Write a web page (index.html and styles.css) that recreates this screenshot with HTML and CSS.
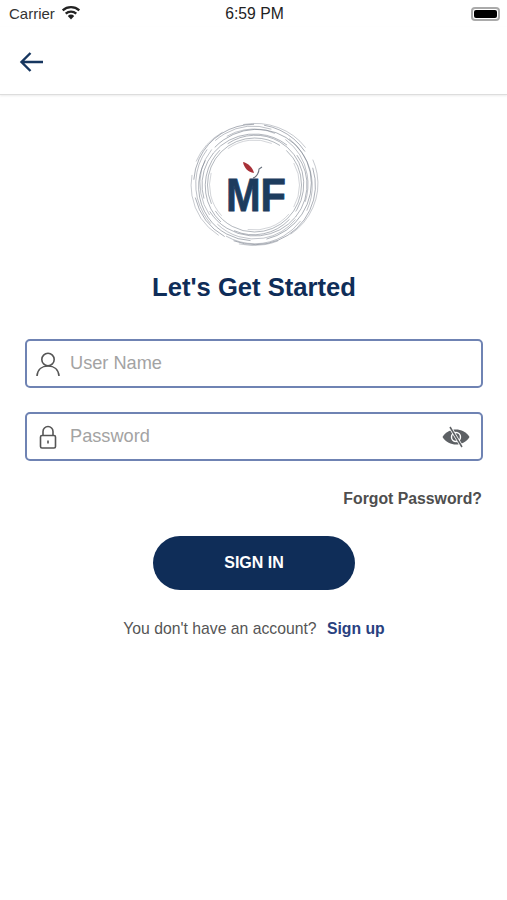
FILE: index.html
```html
<!DOCTYPE html>
<html lang="en">
<head>
    <meta charset="UTF-8">
    <meta name="viewport" content="width=device-width, initial-scale=1.0">
    <title>Sign In</title>
    <link rel="stylesheet" href="styles.css">
</head>
<body>
    <div class="status_bar">
        <div class="status_left">
            <span>Carrier</span>
            <svg class="wifi" width="20" height="15" viewBox="0 0 20 15">
                <path d="M10 14.5 L6.8 10.9 A4.8 4.8 0 0 1 13.2 10.9 Z" fill="#222"/>
                <path d="M4.7 8.6 A8 8 0 0 1 15.3 8.6" fill="none" stroke="#222" stroke-width="2.3"/>
                <path d="M1.7 5.4 A12.4 12.4 0 0 1 18.3 5.4" fill="none" stroke="#222" stroke-width="2.3"/>
            </svg>
        </div>
        <div class="status_time">6:59 PM</div>
        <div class="battery"><div class="battery_fill"></div></div>
    </div>

    <div class="nav_bar">
        <svg width="26" height="22" viewBox="0 0 26 22">
            <path d="M24 11 H3 M11.5 2 L2.5 11 L11.5 20" fill="none" stroke="#16365f" stroke-width="2.4"/>
        </svg>
    </div>

    <div class="content">
        <svg class="logo" width="130" height="128" viewBox="0 0 130 128">
            <!-- sketchy rings, broken up with dashes -->
            <g fill="none" stroke="#6d7582" stroke-width="0.8">
                <ellipse cx="65.5" cy="62.5" rx="63.5" ry="61" stroke-dasharray="70 14 40 22" transform="rotate(-10 65.5 62.5)" opacity="0.45"/>
                <ellipse cx="65.5" cy="62.5" rx="61" ry="60" stroke-dasharray="90 10 50 18" transform="rotate(25 65.5 62.5)" opacity="0.65"/>
                <ellipse cx="65" cy="63" rx="59" ry="58" stroke-dasharray="60 20 80 12" transform="rotate(60 65 63)" opacity="0.5"/>
                <ellipse cx="66" cy="63" rx="57" ry="55" stroke-dasharray="110 16" transform="rotate(-35 66 63)" opacity="0.65"/>
                <ellipse cx="65" cy="62" rx="55" ry="54" stroke-dasharray="50 12 70 20" transform="rotate(80 65 62)" opacity="0.5"/>
                <ellipse cx="65.5" cy="63" rx="52.5" ry="51" stroke-dasharray="130 14" transform="rotate(5 65.5 63)" opacity="0.65"/>
                <ellipse cx="65.5" cy="63" rx="50" ry="49" stroke-dasharray="80 10 60 16" transform="rotate(-60 65.5 63)" opacity="0.6"/>
                <ellipse cx="65.5" cy="63" rx="47" ry="47" stroke-dasharray="120 8" opacity="0.65"/>
                <ellipse cx="65.5" cy="63" rx="45" ry="45" stroke-dasharray="46 30" transform="rotate(40 65.5 63)" opacity="0.35"/>
            </g>
            <path d="M54 40 C59 41 64 46 65 51 C59 50 55 46 54 40 Z" fill="#a83037"/>
            <path d="M64 56 C68 55 70 50 70 47 L73 45" fill="none" stroke="#68707c" stroke-width="1.1"/>
            <text class="logo_text" x="67" y="89" text-anchor="middle" textLength="60" lengthAdjust="spacingAndGlyphs">MF</text>
        </svg>

        <h1>Let's Get Started</h1>

        <div class="input_group">
            <svg width="26" height="26" viewBox="0 0 26 26">
                <circle cx="13" cy="8.5" r="6.2" fill="none" stroke="#555" stroke-width="1.6"/>
                <path d="M2 25 C2.5 18.5 7 15 13 15 C19 15 23.5 18.5 24 25" fill="none" stroke="#555" stroke-width="1.6"/>
            </svg>
            <span class="placeholder">User Name</span>
        </div>

        <div class="input_group">
            <svg width="26" height="26" viewBox="0 0 26 26">
                <rect x="5.5" y="11.5" width="15" height="12.5" rx="1.5" fill="none" stroke="#555" stroke-width="1.6"/>
                <path d="M8 11.5 V7.5 A5 5 0 0 1 18 7.5 V11.5" fill="none" stroke="#555" stroke-width="1.6"/>
                <rect x="12.2" y="16.5" width="1.6" height="3" fill="#555"/>
            </svg>
            <span class="placeholder">Password</span>
            <svg class="eye" width="28" height="22" viewBox="0 0 28 22">
                <path d="M0.5 11 C4 5.5 9 3.5 14 3.5 C19 3.5 24 5.5 27.5 11 C24 16.5 19 18.5 14 18.5 C9 18.5 4 16.5 0.5 11 Z" fill="#5d6064"/>
                <circle cx="14" cy="11" r="4.5" fill="none" stroke="#fff" stroke-width="1.4"/>
                <path d="M8 1 L20 21" stroke="#fff" stroke-width="3.2"/>
                <path d="M8 1 L20 21" stroke="#5d6064" stroke-width="1.5"/>
            </svg>
        </div>

        <div class="forgot">Forgot Password?</div>

        <button>SIGN IN</button>

        <div class="signup">You don't have an account? <a href="#">Sign up</a></div>
    </div>
</body>
</html>
```

FILE: styles.css
```css
body {
    font-family: "Liberation Sans", Arial, sans-serif;
    background-color: #fff;
    margin: 0;
    height: 900px;
    overflow: hidden;
}

.status_bar {
    display: grid;
    grid-template-columns: 1fr auto 1fr;
    align-items: center;
    height: 27px;
    padding: 0 7px 0 9px;
    font-size: 15px;
    color: #333;
}

.status_left {
    display: flex;
    align-items: center;
    gap: 6px;
}

.wifi {
    margin-bottom: 3px;
}

.status_time {
    color: #222;
    font-size: 15.7px;
}

.battery {
    justify-self: end;
    width: 29px;
    height: 14px;
    box-sizing: border-box;
    border: 2px solid #aaa;
    border-radius: 4px;
    padding: 1px;
}

.battery_fill {
    height: 100%;
    background: #000;
    border-radius: 2px;
}

.nav_bar {
    display: flex;
    align-items: center;
    box-sizing: border-box;
    height: 68px;
    padding: 2px 0 0 19px;
    border-bottom: 1px solid #ddd;
    box-shadow: 0px 1px 2px rgba(0, 0, 0, 0.08);
}

.content {
    display: flex;
    flex-direction: column;
    align-items: center;
    padding: 27px 24px 0 25px;
}

.logo_text {
    font-family: "Liberation Sans", Arial, sans-serif;
    font-weight: bold;
    font-size: 46px;
    fill: #1d3c5e;
    stroke: #1d3c5e;
    stroke-width: 0.8px;
}

h1 {
    margin: 21px 0 0;
    font-size: 25.6px;
    line-height: 32px;
    color: #0f2d58;
}

.input_group {
    display: flex;
    align-items: center;
    align-self: stretch;
    box-sizing: border-box;
    height: 49px;
    margin-top: 24px;
    padding: 0 11px 0 8px;
    border: 2px solid #6f83b3;
    border-radius: 5px;
}

h1 + .input_group {
    margin-top: 36px;
}

.placeholder {
    margin-left: 9px;
    flex: 1;
    font-size: 18.2px;
    color: #a3a3a3;
}

.forgot {
    align-self: flex-end;
    margin-top: 29px;
    margin-right: 1px;
    font-size: 15.8px;
    font-weight: bold;
    color: #4e4e4e;
}

button {
    width: 202px;
    height: 54px;
    margin-top: 28px;
    border: none;
    border-radius: 27px;
    background-color: #0f2d58;
    color: #fff;
    font-family: inherit;
    font-size: 16px;
    font-weight: bold;
}

.signup {
    margin-top: 30px;
    font-size: 15.75px;
    color: #555;
}

.signup a {
    margin-left: 6px;
    font-weight: bold;
    color: #29417f;
    text-decoration: none;
}
```
